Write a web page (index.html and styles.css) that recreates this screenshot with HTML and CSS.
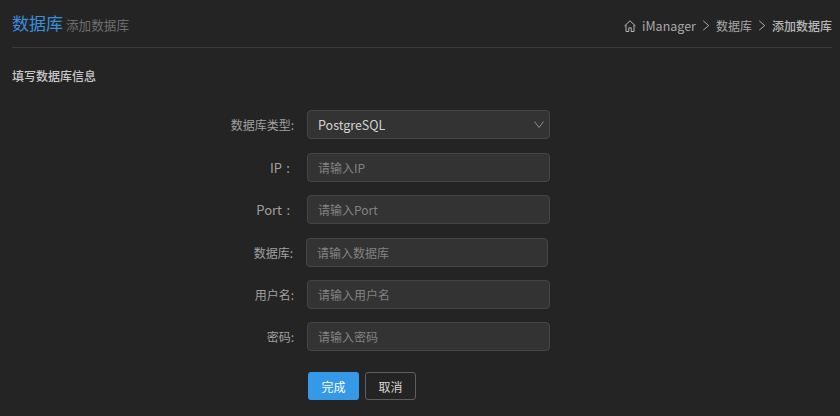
FILE: index.html
```html
<!DOCTYPE html>
<html lang="zh-CN">
<head>
    <meta charset="UTF-8">
    <title>添加数据库</title>
    <link rel="stylesheet" href="styles.css">
</head>
<body>
<div class="page">
    <div class="page-header">
        <div class="page-title">
            <h1>数据库</h1>
            <small>添加数据库</small>
        </div>
        <div class="breadcrumb">
            <svg class="home-icon" viewBox="0 0 12 12" fill="none" stroke="#b4b4b4" stroke-width="1">
                <path d="M.5 6 6 .8 11.500 6M2 4.800v6.700h2.800V7.800h2.400v3.700H10V4.800"/>
            </svg>
            <span class="crumb-app">iManager</span>
            <svg class="crumb-sep" viewBox="0 0 8 12" fill="none" stroke="#b4b4b4" stroke-width="1"><path d="M1 1l6 5-6 5"/></svg>
            <span>数据库</span>
            <svg class="crumb-sep" viewBox="0 0 8 12" fill="none" stroke="#b4b4b4" stroke-width="1"><path d="M1 1l6 5-6 5"/></svg>
            <span class="crumb-active">添加数据库</span>
        </div>
    </div>

    <h2 class="section-title">填写数据库信息</h2>

    <form class="db-form">
        <div class="form-group">
            <label for="db-type">数据库类型:</label>
            <div class="select-wrapper">
                <select id="db-type">
                    <option>PostgreSQL</option>
                    <option>MySQL</option>
                </select>
                <svg class="select-arrow" viewBox="0 0 10 7" fill="none" stroke="#8c8c8c" stroke-width="1"><path d="M.5 .5 5 6.500 9.500 .5"/></svg>
            </div>
        </div>
        <div class="form-group">
            <label class="label-spaced" for="db-ip">IP :</label>
            <input type="text" id="db-ip" placeholder="请输入IP">
        </div>
        <div class="form-group">
            <label class="label-spaced" for="db-port">Port :</label>
            <input type="text" id="db-port" placeholder="请输入Port">
        </div>
        <div class="form-group form-group-shift">
            <label for="db-name">数据库:</label>
            <input type="text" id="db-name" placeholder="请输入数据库">
        </div>
        <div class="form-group">
            <label for="db-user">用户名:</label>
            <input type="text" id="db-user" placeholder="请输入用户名">
        </div>
        <div class="form-group">
            <label for="db-pass">密码:</label>
            <input type="text" id="db-pass" placeholder="请输入密码">
        </div>
        <div class="form-actions">
            <button type="submit" class="btn btn-primary">完成</button>
            <button type="button" class="btn btn-default">取消</button>
        </div>
    </form>
</div>
</body>
</html>
```

FILE: styles.css
```css
* {
    box-sizing: border-box;
    margin: 0;
    padding: 0;
    font-family: "Noto Sans CJK SC", "Noto Sans", sans-serif;
}

body {
    background-color: #242424;
    color: #b4b4b4;
    overflow: hidden;
}

.page {
    padding: 0 8px 0 12px;
}

.page-header {
    display: flex;
    justify-content: space-between;
    align-items: center;
    height: 48px;
    border-bottom: 1px solid #3a3a3a;
}

.page-title {
    display: flex;
    align-items: baseline;
    gap: 3px;
    margin-top: -1px;
}

h1 {
    font-size: 17px;
    font-weight: 400;
    line-height: 24px;
    color: #3a8fdc;
}

small {
    font-size: 12.6px;
    color: #6e6e6e;
}

.breadcrumb {
    display: flex;
    align-items: center;
    font-size: 12px;
    color: #a8a8a8;
    margin-top: 4px;
}

.home-icon {
    width: 12px;
    height: 12px;
    margin-right: 6px;
}

.crumb-app {
    font-size: 12.5px;
}

.crumb-sep {
    width: 8px;
    height: 11px;
    margin: 0 6px;
}

.crumb-active {
    color: #b8b8b8;
    font-weight: 500;
}

.section-title {
    margin-top: 20px;
    font-size: 12px;
    font-weight: 500;
    line-height: 16px;
    color: #c8c8c8;
}

.db-form {
    margin-top: 26.4px;
}

.form-group {
    display: flex;
    align-items: center;
    height: 29px;
    margin-bottom: 13.4px;
}

.form-group label {
    width: 282px;
    text-align: right;
    font-size: 12px;
    color: #a0a0a0;
}

.form-group .label-spaced {
    font-size: 13px;
    width: 278px;
    margin-right: 4px;
    word-spacing: 1.5px;
}

.form-group input,
.form-group select,
.select-wrapper {
    width: 243px;
    height: 29px;
    margin-left: 13px;
}

.form-group input,
.form-group select {
    padding: 0 10px;
    background-color: #333333;
    border: 1px solid #464646;
    border-radius: 4px;
    font-size: 12px;
    color: #d2d2d2;
    outline: none;
    appearance: none;
}

.form-group select {
    font-size: 12.5px;
}

.form-group input::placeholder {
    color: #828282;
}

.select-wrapper {
    position: relative;
}

.select-wrapper select {
    margin-left: 0;
}

.select-arrow {
    position: absolute;
    right: 6px;
    top: 11px;
    width: 10px;
    height: 7px;
}

.form-group-shift {
    margin-left: -1px;
}

.form-group-shift input {
    width: 242px;
}

.form-actions {
    display: flex;
    gap: 6px;
    margin-top: 21px;
    padding-left: 296px;
}

.btn {
    width: 51px;
    height: 28px;
    border-radius: 3px;
    font-size: 12px;
    cursor: pointer;
}

.btn-primary {
    background-color: #349ae8;
    border: none;
    color: #ffffff;
}

.btn-default {
    background-color: #242424;
    border: 1px solid #5e5e5e;
    color: #d8d8d8;
}
```
